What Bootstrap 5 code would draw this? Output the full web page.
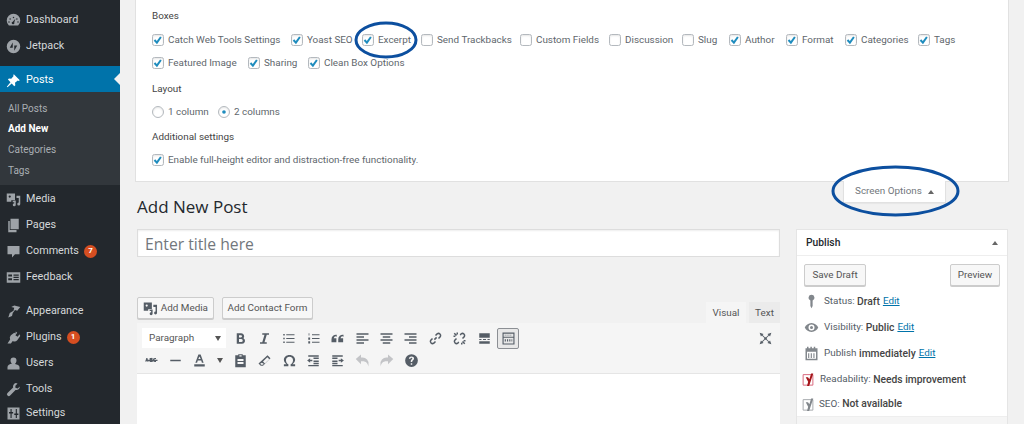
<!DOCTYPE html>
<html lang="en">
<head>
<meta charset="utf-8">
<title>Add New Post</title>
<link href="https://cdn.jsdelivr.net/npm/bootstrap@5.3.0/dist/css/bootstrap.min.css" rel="stylesheet">
<style>
html,body{height:424px;overflow:hidden}
body{background:#f1f1f1;font-family:Roboto,"Liberation Sans",sans-serif;font-size:9.900px;color:#555d66;position:relative}
.wp-side{width:120px;height:424px;background:#23282d;flex:none;overflow:hidden;padding-top:6px;font-size:10.800px}
.wp-item{height:26px;display:flex;align-items:center;color:#d5d8da;text-decoration:none;position:relative;padding-top:2px}
.wp-item:last-child{height:23px;padding-top:1px}
.wp-ico{width:26px;flex:none;display:flex;justify-content:center;padding-left:1px}
.wp-ico svg{width:15px;height:15px;fill:#9ea3a8}
.wp-item.on{background:#0073aa;color:#fff}
.wp-item.on svg{fill:#fff}
.wp-item.on::after{content:"";position:absolute;right:0;top:7px;border:6px solid transparent;border-right-color:#f1f1f1;border-left:0}
.wp-sub{background:#32373c;padding:6px 0 5px 8px;height:93px;font-size:10px;color:#a9aeb3}
.wp-sub div{height:20.600px;display:flex;align-items:center}
.wp-sub .now{color:#fff;font-weight:700}
.wp-gap{height:8px}
.wp-count{background:#d54e21;color:#fff;border-radius:50%;width:13px;height:13px;font-size:8px;font-weight:700;display:inline-flex;align-items:center;justify-content:center;margin-left:5px}
.wp-main{flex:1;min-width:0;padding-left:15px;padding-right:15px}
.wp-opts{background:#fff;border:1px solid #e1e1e1;border-top:0;border-radius:0;height:182px;width:874px;padding:0 16px}
.wp-lab{height:24px;display:flex;align-items:center;color:#444;flex:none}
.wp-row{height:23px;display:flex;align-items:center;flex:none}
.wp-chk{display:flex;align-items:center;color:#60666c;white-space:nowrap}
.wp-chk input{margin:0 4px 0 0;width:12px;height:12px;flex:none;border:1px solid #b4b9be;border-radius:0;box-shadow:inset 0 1px 2px rgba(0,0,0,.1)}
.wp-chk input:checked[type=checkbox]{background-color:#fff;border-color:#b4b9be;background-size:12px;background-image:url("data:image/svg+xml,%3csvg xmlns='http://www.w3.org/2000/svg' viewBox='0 0 12 12'%3e%3cpath fill='none' stroke='%231e8cbe' stroke-width='2' d='M2.500 6l2.400 2.600 4-5.600'/%3e%3c/svg%3e")}
.wp-chk input[type=radio]{border-radius:50%}
.wp-chk input:checked[type=radio]{background-color:#fff;border-color:#b4b9be;background-size:10px;background-position:center;background-image:url("data:image/svg+xml,%3csvg xmlns='http://www.w3.org/2000/svg' viewBox='0 0 12 12'%3e%3ccircle cx='6' cy='6' r='2.200' fill='%231e8cbe'/%3e%3c/svg%3e")}
.wp-tab{position:absolute;left:843px;top:181px;width:103px;height:22px;background:#fff;border:1px solid #e1e1e1;border-top:0;display:flex;align-items:center;justify-content:center;color:#72777c;box-shadow:0 1px 1px rgba(0,0,0,.04)}
.wp-caret{display:inline-block;border:3.500px solid transparent;border-top:0;border-bottom:4px solid #666;margin-left:6px}
.wp-down{display:inline-block;border:3.500px solid transparent;border-bottom:0;border-top:5px solid #555}
.wp-title{font-family:"Open Sans",sans-serif;font-size:17px;color:#23282d;height:45px;margin-top:2px;display:flex;align-items:center;line-height:1;margin-left:2px}
.wp-cols{display:flex;gap:16px;margin-left:2px}
.wp-left{width:643px;flex:none}
.wp-right{width:212px;flex:none}
.wp-inp{height:28px;border-radius:0;border:1px solid #ddd;background:#fff;font-family:"Open Sans",sans-serif;font-size:15.700px;padding:1px 7px 0;color:#72777c;box-shadow:inset 0 1px 2px rgba(0,0,0,.07)}
.wp-inp::placeholder{color:#72777c}
.wp-medi{height:22px;margin-top:40px;display:flex;gap:8px}
.btn.wp-btn{height:22px;padding:1px 5px 0;font-size:9.900px;background:#f7f7f7;border:1px solid #ccc;border-radius:2px;color:#555;box-shadow:0 1px 0 #ccc;display:inline-flex;align-items:center;justify-content:center;gap:3px;white-space:nowrap}
.wp-wrap{position:relative}
.wp-tabs{position:absolute;right:0;top:-21px;display:flex;gap:3px}
.wp-vt{height:21px;padding-top:2px;display:flex;align-items:center;justify-content:center;color:#555;background:#ebebeb;width:31px}
.wp-vt.act{background:#f5f5f5;width:40px}
.wp-tools{margin-top:4px;background:#f5f5f5;height:51px;border-bottom:1px solid #e5e5e5;padding-top:4px;position:relative}
.wp-line{height:22px;display:flex;align-items:center}
.wp-line+.wp-line{margin-left:2px}
.wp-tb{width:24.400px;height:22px;display:flex;align-items:center;justify-content:center;flex:none}
.wp-tb svg{width:15px;height:15px;fill:#555d66}
.wp-tb.act{height:21px;width:22px;margin:0 1.200px;border:1px solid #8c8f94;border-radius:2px;background:#e8e8e8}
.wp-tb.nar{width:16px}
.wp-sel{width:84px;height:20px;background:#fff;margin:0 2px 0 5px;display:flex;align-items:center;justify-content:space-between;padding:0 5px 0 7px;color:#555;flex:none}
.wp-full{position:absolute;right:2px;top:4px}
.wp-tb.wp-full svg{width:13px;height:13px}
.wp-ed{background:#fff;height:50px}
.wp-pub{background:#fff;border:1px solid #e5e5e5;border-bottom:0;border-radius:0;height:195px;overflow:hidden}
.wp-ph{height:26px;flex:none;border-bottom:1px solid #eee;display:flex;align-items:center;justify-content:space-between;padding:0 9px;font-weight:500;font-size:10.300px;color:#23282d}
.wp-pb{padding:8px 7px 0 7px;display:flex;justify-content:space-between;flex:none}
.wp-ml{height:25.800px;flex:none;display:flex;align-items:center;padding-left:7px;color:#555d66;white-space:pre}
.wp-ml svg{width:15px;height:15px;flex:none;margin-right:5px}
.wp-ml b{color:#444;font-weight:500;font-size:10.300px}
.wp-ml a{color:#0073aa;margin-left:3px}
.wp-ln{margin-top:3px;flex:none}
.wp-foot{background:#f5f5f5;border-top:1px solid #eee;flex:1}
.wp-ring{position:absolute;fill:none;stroke:#0c4f9f;stroke-width:3;pointer-events:none}
</style>
</head>
<body>
<div class="d-flex">
  <nav class="wp-side">
    <div class="wp-item"><span class="wp-ico"><svg viewBox="0 0 20 20"><path d="M3.800 16.600A9 9 0 1 1 16.200 16.600ZM10 5a1 1 0 1 0 0 2 1 1 0 0 0 0-2ZM5.500 7a1 1 0 1 0 0 2 1 1 0 0 0 0-2ZM14.500 7a1 1 0 1 0 0 2 1 1 0 0 0 0-2ZM4 11a1 1 0 1 0 0 2 1 1 0 0 0 0-2ZM16 11a1 1 0 1 0 0 2 1 1 0 0 0 0-2ZM12.500 7.500L9 11.500a1.800 1.800 0 1 0 2 1Z" fill-rule="evenodd"/></svg></span>Dashboard</div>
    <div class="wp-item"><span class="wp-ico"><svg viewBox="0 0 20 20"><path fill-rule="evenodd" d="M10 1a9 9 0 1 1 0 18 9 9 0 0 1 0-18ZM9 4.500L5 11.500h4ZM11 8.500v7l4-7Z"/></svg></span>Jetpack</div>
    <div class="wp-gap"></div>
    <div class="wp-item on"><span class="wp-ico"><svg viewBox="0 0 20 20"><path d="M10.400 1.500l8 8-1.500 1-1.200-.6-3.700 3.200.4 3.100-1.400 1.300-3.400-3.400L2 19l-.9-.8 4.900-6L2.600 8.800l1.300-1.400 3.100.4 3.200-3.700-.6-1.200Z"/></svg></span>Posts</div>
    <div class="wp-sub"><div>All Posts</div><div class="now">Add New</div><div>Categories</div><div>Tags</div></div>
    <div class="wp-item"><span class="wp-ico"><svg viewBox="0 0 20 20"><path fill-rule="evenodd" d="M1 2h11v9H7v2H1ZM5 4.500a1.500 1.500 0 1 0 0 3 1.500 1.500 0 0 0 0-3ZM14 5h5v11a2 2 0 1 1-2-2V8h-3ZM9 12l4-.6V17a2 2 0 1 1-2-2v-1.500H9Z"/></svg></span>Media</div>
    <div class="wp-item"><span class="wp-ico"><svg viewBox="0 0 20 20"><path d="M6 1h11v14H6ZM3 4h2v12h9v3H3Z"/></svg></span>Pages</div>
    <div class="wp-item"><span class="wp-ico"><svg viewBox="0 0 20 20"><path d="M2 2.500h16v11h-6l-4 4.500v-4.500H2Z"/></svg></span>Comments<span class="wp-count">7</span></div>
    <div class="wp-item"><span class="wp-ico"><svg viewBox="0 0 20 20"><path fill-rule="evenodd" d="M1 3h18v14H1ZM3 6v2.500h5V6ZM10 6v1.500h7V6ZM10 9v1.500h7V9ZM3 11v2.500h5V11ZM10 12v1.500h7V12Z"/></svg></span>Feedback</div>
    <div class="wp-gap"></div>
    <div class="wp-item"><span class="wp-ico"><svg viewBox="0 0 20 20"><path d="M11 2l8 2-4 5-3-1-3 4-1 4-5 2 2-6 5-3 1-4-4-1Z"/></svg></span>Appearance</div>
    <div class="wp-item"><span class="wp-ico"><svg viewBox="0 0 20 20"><path d="M13 2l2 1.500-2.500 3.500 3 2L18 5.500 19 8l-4 5.500a5 5 0 0 1-6 1L6.500 18H2l3.500-5.500A5 5 0 0 1 6.500 7L11 3.500l1.500 1Z"/></svg></span>Plugins<span class="wp-count">1</span></div>
    <div class="wp-item"><span class="wp-ico"><svg viewBox="0 0 20 20"><path d="M10 2a4 4 0 0 1 4 4c0 2-1 3.500-2 4.500 3 .5 6 2 6 4V18H2v-3.500c0-2 3-4 6-4.500C7 9.500 6 8 6 6a4 4 0 0 1 4-4Z"/></svg></span>Users</div>
    <div class="wp-item"><span class="wp-ico"><svg viewBox="0 0 20 20"><path d="M14 1.500a4.500 4.500 0 0 0-4.500 5.800L2 14.500a2.500 2.500 0 0 0 0 3.500 2.500 2.500 0 0 0 3.500 0l7.200-7.500A4.500 4.500 0 0 0 18.500 6l-3 2.500-3-1V5l3-3a4 4 0 0 0-1.500-.5Z"/></svg></span>Tools</div>
    <div class="wp-item"><span class="wp-ico"><svg viewBox="0 0 20 20"><path fill-rule="evenodd" d="M2 2h16v16H2ZM6 4v4H4v2h2v6h1.500v-6h2V8h-2V4ZM13 4v6h-2v2h2v4h1.500v-4h2v-2h-2V4Z"/></svg></span>Settings</div>
  </nav>
  <main class="wp-main">
    <section class="card wp-opts">
      <div class="wp-lab" style="margin-top:4px">Boxes</div>
      <div class="wp-row" style="margin-top:1px">
        <label class="wp-chk" style="width:139px"><input class="form-check-input" type="checkbox" checked>Catch Web Tools Settings</label>
        <label class="wp-chk" style="width:71px"><input class="form-check-input" type="checkbox" checked>Yoast SEO</label>
        <label class="wp-chk" style="width:59px"><input class="form-check-input" type="checkbox" checked>Excerpt</label>
        <label class="wp-chk" style="width:99px"><input class="form-check-input" type="checkbox">Send Trackbacks</label>
        <label class="wp-chk" style="width:89px"><input class="form-check-input" type="checkbox">Custom Fields</label>
        <label class="wp-chk" style="width:73px"><input class="form-check-input" type="checkbox">Discussion</label>
        <label class="wp-chk" style="width:47px"><input class="form-check-input" type="checkbox">Slug</label>
        <label class="wp-chk" style="width:57px"><input class="form-check-input" type="checkbox" checked>Author</label>
        <label class="wp-chk" style="width:59px"><input class="form-check-input" type="checkbox" checked>Format</label>
        <label class="wp-chk" style="width:73px"><input class="form-check-input" type="checkbox" checked>Categories</label>
        <label class="wp-chk"><input class="form-check-input" type="checkbox" checked>Tags</label>
      </div>
      <div class="wp-row">
        <label class="wp-chk" style="width:96px"><input class="form-check-input" type="checkbox" checked>Featured Image</label>
        <label class="wp-chk" style="width:60px"><input class="form-check-input" type="checkbox" checked>Sharing</label>
        <label class="wp-chk"><input class="form-check-input" type="checkbox" checked>Clean Box Options</label>
      </div>
      <div class="wp-lab" style="margin-top:2px">Layout</div>
      <div class="wp-row">
        <label class="wp-chk" style="width:66px"><input class="form-check-input" type="radio" name="cols">1 column</label>
        <label class="wp-chk"><input class="form-check-input" type="radio" name="cols" checked>2 columns</label>
      </div>
      <div class="wp-lab" style="margin-top:1px">Additional settings</div>
      <div class="wp-row"><label class="wp-chk"><input class="form-check-input" type="checkbox" checked>Enable full-height editor and distraction-free functionality.</label></div>
    </section>
    <h1 class="wp-title fw-normal mb-0">Add New Post</h1>
    <div class="wp-cols">
      <div class="wp-left">
        <input class="form-control wp-inp" type="text" placeholder="Enter title here">
        <div class="wp-medi">
          <button class="btn wp-btn" type="button" style="width:77px"><svg width="15" height="15" viewBox="0 0 20 20" fill="#555d66" fill-rule="evenodd"><path d="M1 2h11v9H7v2H1ZM5 4.500a1.500 1.500 0 1 0 0 3 1.500 1.500 0 0 0 0-3ZM14 5h5v11a2 2 0 1 1-2-2V8h-3ZM9 12l4-.6V17a2 2 0 1 1-2-2v-1.500H9Z"/></svg>Add Media</button>
          <button class="btn wp-btn" type="button" style="width:91px">Add Contact Form</button>
        </div>
        <div class="wp-wrap">
          <div class="wp-tools">
            <div class="wp-tabs"><span class="wp-vt act">Visual</span><span class="wp-vt">Text</span></div>
            <div class="wp-line">
              <div class="wp-sel">Paragraph<span class="wp-down"></span></div>
              <div class="wp-tb"><svg viewBox="0 0 20 20"><path fill-rule="evenodd" d="M5 3h6a4 4 0 0 1 3 6.500A4 4 0 0 1 12 17H5ZM8 5.500v3h2.500a1.500 1.500 0 0 0 0-3ZM8 10.500v4h3a2 2 0 0 0 0-4Z"/></svg></div>
              <div class="wp-tb"><svg viewBox="0 0 20 20"><path d="M7 3h9v2h-3l-3 10h3v2H4v-2h3l3-10H7Z"/></svg></div>
              <div class="wp-tb"><svg viewBox="0 0 20 20"><path d="M3 4h2v2H3ZM7 4.300h11v1.400H7ZM3 9h2v2H3ZM7 9.300h11v1.400H7ZM3 14h2v2H3ZM7 14.300h11v1.400H7Z"/></svg></div>
              <div class="wp-tb"><svg viewBox="0 0 20 20"><path d="M3.500 3h1v3h-1ZM3 8.500h2.500v3H3ZM3 13.500h2.500v3H3ZM8 4.300h10v1.400H8ZM8 9.300h10v1.400H8ZM8 14.300h10v1.400H8Z"/></svg></div>
              <div class="wp-tb"><svg viewBox="0 0 20 20"><path d="M9 5a6 6 0 0 0-7 6v4h6.500V9.500H5A3 3 0 0 1 9 7.500ZM18 5a6 6 0 0 0-7 6v4h6.500V9.500H14a3 3 0 0 1 4-2Z"/></svg></div>
              <div class="wp-tb"><svg viewBox="0 0 20 20"><path d="M2 3h16v2H2ZM2 7h10v2H2ZM2 11h16v2H2ZM2 15h10v2H2Z"/></svg></div>
              <div class="wp-tb"><svg viewBox="0 0 20 20"><path d="M2 3h16v2H2ZM5 7h10v2H5ZM2 11h16v2H2ZM5 15h10v2H5Z"/></svg></div>
              <div class="wp-tb"><svg viewBox="0 0 20 20"><path d="M2 3h16v2H2ZM8 7h10v2H8ZM2 11h16v2H2ZM8 15h10v2H8Z"/></svg></div>
              <div class="wp-tb"><svg viewBox="0 0 20 20" style="fill:none;stroke:#555d66;stroke-width:2"><path d="M8.500 11.500l3-3M10 6l2.500-2.500a3 3 0 0 1 4 4L14 10M10 14l-2.500 2.500a3 3 0 0 1-4-4L6 10"/></svg></div>
              <div class="wp-tb"><svg viewBox="0 0 20 20" style="fill:none;stroke:#555d66;stroke-width:2"><path d="M11 5.500l1.500-2a3 3 0 0 1 4 4L14 10M9 14.500l-1.500 2a3 3 0 0 1-4-4L6 10M3 3l3 3M2 7h2.500M7 2v2.500M17 17l-3-3M18 13h-2.500M13 18v-2.500"/></svg></div>
              <div class="wp-tb"><svg viewBox="0 0 20 20"><path d="M3 3h14v6H3ZM3 10.500h3v1.500H3ZM8 10.500h4v1.500H8ZM14 10.500h3v1.500h-3ZM3 13.500h14V17H3Z"/></svg></div>
              <div class="wp-tb act"><svg viewBox="0 0 20 20"><path fill-rule="evenodd" d="M2 2h16v16H2ZM3.500 3.500v4h13v-4ZM3.500 9v7.500h13V9ZM5 5h1.200v1H5ZM7.500 5h1.200v1H7.500ZM10 5h1.200v1H10ZM12.500 5h1.200v1H12.500ZM5 11h1.500v3H5ZM8 11h1.500v3H8ZM11 11h1.500v3H11ZM14 11h1v3h-1Z"/></svg></div>
            </div>
            <div class="wp-line">
              <div class="wp-tb"><svg viewBox="0 0 20 20"><path d="M2 9h16v1.500H2ZM3 6.500h1.500L6 12H5l-.3-1H3l-.3 1H2ZM7.500 6.500H10a1.300 1.300 0 0 1 .7 2.500A1.400 1.400 0 0 1 10 12H7.500ZM16 8h-1a1 1 0 1 0 0 2.800h1V12h-1.500a2.700 2.700 0 1 1 0-5.500H16Z"/></svg></div>
              <div class="wp-tb"><svg viewBox="0 0 20 20"><path d="M3 9h14v2H3Z"/></svg></div>
              <div class="wp-tb"><svg viewBox="0 0 20 20"><path fill-rule="evenodd" d="M8.500 2h3l4 11h-2.300l-.9-3H7.700l-.9 3H4.500ZM10 4.500L8.400 8h3.200ZM3 15h14v3H3Z"/></svg></div>
              <div class="wp-tb nar"><span class="wp-down"></span></div>
              <div class="wp-tb"><svg viewBox="0 0 20 20"><path fill-rule="evenodd" d="M7 1.500h6V3h4v16H3V3h4ZM8.500 3v1.500h3V3ZM6 8v2.500h8V8ZM6 12v2.500h8V12Z"/></svg></div>
              <div class="wp-tb"><svg viewBox="0 0 20 20"><path fill-rule="evenodd" d="M14 3l4 4-10 10H5l-3-3ZM13.800 5.500L8 11.400l2.600 2.600 5.800-5.800ZM6.500 13l-2.300 1.200L5.700 15.500H7.400l1.800-1Z"/></svg></div>
              <div class="wp-tb"><svg viewBox="0 0 20 20"><path d="M10 2.500c4.500 0 7.500 3 7.500 6.500 0 2.500-1.500 4.500-3.500 6h3.500v2.500H11.500V15c2-1 3.200-3 3.200-5.500 0-2.700-2-4.500-4.700-4.500S5.300 6.800 5.300 9.500c0 2.500 1.200 4.500 3.200 5.500v2.500H2.500V15H6C4 13.500 2.500 11.500 2.500 9c0-3.500 3-6.500 7.500-6.500Z"/></svg></div>
              <div class="wp-tb"><svg viewBox="0 0 20 20"><path d="M3 3h14v2H3ZM10 6h7v2h-7ZM1.500 10l4-3v2h3v2h-3v2ZM10 10h7v2h-7ZM10 13h7v2h-7ZM3 16h14v1.500H3Z"/></svg></div>
              <div class="wp-tb"><svg viewBox="0 0 20 20"><path d="M3 3h14v2H3ZM3 6h7v2H3ZM18.500 10l-4-3v2h-3v2h3v2ZM3 10h7v2H3ZM3 13h7v2H3ZM3 16h14v1.500H3Z"/></svg></div>
              <div class="wp-tb"><svg viewBox="0 0 20 20" style="fill:#c3c4c7"><path d="M8 2v4h2a8 8 0 0 1 8 9v3c-1-4-3-7-8-7H8v4L1 8Z"/></svg></div>
              <div class="wp-tb"><svg viewBox="0 0 20 20" style="fill:#c3c4c7"><path d="M12 2v4h-2a8 8 0 0 0-8 9v3c1-4 3-7 8-7h2v4l7-7Z"/></svg></div>
              <div class="wp-tb"><svg viewBox="0 0 20 20"><path fill-rule="evenodd" d="M10 1.500a8.500 8.500 0 1 1 0 17 8.500 8.500 0 0 1 0-17ZM9 13.500v2h2v-2ZM10 4.500c-2.300 0-3.500 1.200-3.500 3.200h2.100c0-.9.400-1.400 1.300-1.400.8 0 1.200.4 1.200 1 0 1.300-2.100 1.500-2.100 3.500v1.200h2v-.8c0-1.300 2.400-1.700 2.400-4 0-1.800-1.300-2.700-3.400-2.700Z"/></svg></div>
            </div>
            <div class="wp-tb wp-full"><svg viewBox="0 0 20 20"><path d="M1 1l6 2-1.500 1.500L9 8h2l3.500-3.500L13 3l6-2-2 6-1.500-1.500L12 9v2l3.500 3.500L17 13l2 6-6-2 1.500-1.500L11 12H9l-3.500 3.500L7 17l-6 2 2-6 1.500 1.500L8 11V9L4.500 5.500 3 7Z"/></svg></div>
          </div>
          <div class="wp-ed"></div>
        </div>
      </div>
      <aside class="wp-right">
        <div class="card wp-pub">
          <div class="wp-ph">Publish<span class="wp-caret" style="margin:0"></span></div>
          <div class="wp-pb"><button class="btn wp-btn" type="button" style="width:62px">Save Draft</button><button class="btn wp-btn" type="button" style="width:50px">Preview</button></div>
          <div class="wp-ln">
            <div class="wp-ml"><svg viewBox="0 0 20 20" fill="#82878c"><path d="M10 1a4 4 0 0 1 1.500 7.700V16l-1.500 3-1.500-3V8.700A4 4 0 0 1 10 1Z"/></svg>Status: <b>Draft</b><a href="#">Edit</a></div>
            <div class="wp-ml"><svg viewBox="0 0 20 20" fill="#82878c" fill-rule="evenodd"><path d="M10 4c4.500 0 7.500 3 9 6-1.500 3-4.500 6-9 6s-7.500-3-9-6c1.500-3 4.500-6 9-6ZM10 6a4 4 0 1 0 0 8 4 4 0 0 0 0-8ZM10 8a2 2 0 1 1 0 4 2 2 0 0 1 0-4Z"/></svg>Visibility: <b>Public</b><a href="#">Edit</a></div>
            <div class="wp-ml"><svg viewBox="0 0 20 20" fill="#82878c" fill-rule="evenodd"><path d="M2 3h2V1h2v2h2.500V1h2v2H13V1h2v2h3v16H2ZM4 7.500V17h12V7.500ZM5.500 9.500H7V16H5.500ZM9 9.500h1.500V16H9ZM12.500 9.500H14V16h-1.500Z"/></svg>Publish <b>immediately</b><a href="#">Edit</a></div>
            <div class="wp-ml" style="padding-left:5px"><svg viewBox="0 0 20 20" style="margin-right:3px"><path d="M1.500 3.500h13v14h-13Z" fill="#fff" stroke="#d9677b" stroke-width="1.300"/><path d="M5 7l3.200 6-1.500 5.500h2.800L15 2h-2.800l-2.400 7.500L8 7Z" fill="#a4161a"/></svg>Readability: <b>Needs improvement</b></div>
            <div class="wp-ml" style="padding-left:5px;height:24px"><svg viewBox="0 0 20 20" style="margin-right:2px"><path d="M1.500 3.500h13v14h-13Z" fill="#fff" stroke="#a7aaad" stroke-width="1.300"/><path d="M5 7l3.200 6-1.500 5.500h2.800L15 2h-2.800l-2.400 7.500L8 7Z" fill="#82878c"/></svg>SEO: <b>Not available</b></div>
          </div>
          <div class="wp-foot"></div>
        </div>
      </aside>
    </div>
  </main>
</div>
<div class="wp-tab">Screen Options<span class="wp-caret"></span></div>
<svg class="wp-ring" style="left:354px;top:21px" width="64" height="38"><ellipse cx="32" cy="19" rx="30" ry="17"/></svg>
<svg class="wp-ring" style="left:831px;top:165px" width="129" height="52"><ellipse cx="64.500" cy="26" rx="62.500" ry="24"/></svg>
</body>
</html>
